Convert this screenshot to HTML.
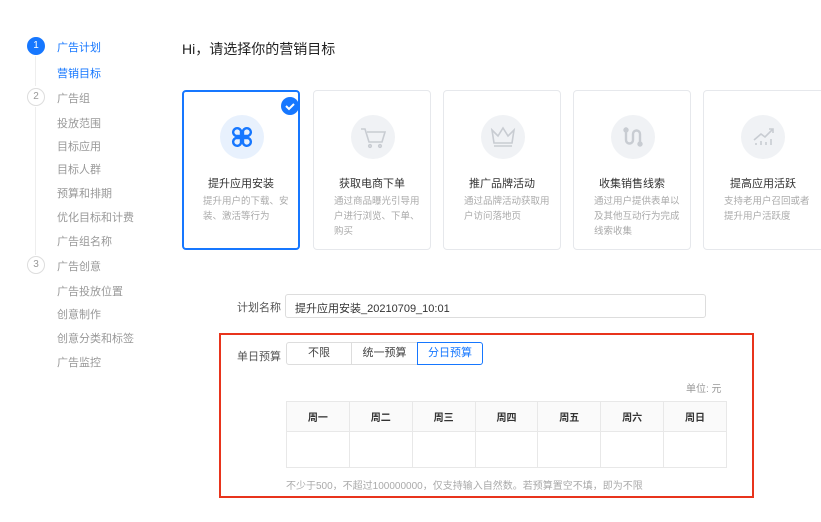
<!DOCTYPE html>
<html><head><meta charset="utf-8"><style>
*{margin:0;padding:0;box-sizing:border-box}
body{width:821px;height:522px;background:#fff;font-family:"Liberation Sans","Noto Sans CJK SC",sans-serif;position:relative;overflow:hidden;color:#333}
.a{position:absolute}
.nav{font-size:11px;color:#999;left:57px}
.circ{width:18px;height:18px;border-radius:50%;border:1px solid #ddd;color:#999;font-size:10px;text-align:center;line-height:16px;left:27px}
.vl{left:35px;width:1px;background:#eee}
.card{top:90px;width:118px;height:160px;border:1px solid #e6e8ec;border-radius:4px;text-align:center}
.ic{position:absolute;left:37px;top:24px;width:44px;height:44px;border-radius:50%;background:#f0f2f5}
.ct{position:absolute;top:84px;left:0;right:0;font-size:11px;color:#333}
.cd{position:absolute;top:103px;left:20px;width:88px;font-size:9.5px;color:#aaa;line-height:15px;text-align:left}
table{border-collapse:collapse}
td{border:1px solid #e8e8e8;width:63px;text-align:center;font-size:10px;color:#333;font-weight:bold}
</style></head><body>
<div class="a vl" style="top:56px;height:30px"></div>
<div class="a vl" style="top:107px;height:148px"></div>
<div class="a circ" style="top:37px;background:#1677ff;border-color:#1677ff;color:#fff">1</div>
<div class="a circ" style="top:88px">2</div>
<div class="a circ" style="top:256px">3</div>
<div class="a nav" style="top:39px;color:#1677ff">广告计划</div>
<div class="a nav" style="top:65px;color:#1677ff">营销目标</div>
<div class="a nav" style="top:90px">广告组</div>
<div class="a nav" style="top:115px">投放范围</div>
<div class="a nav" style="top:138px">目标应用</div>
<div class="a nav" style="top:161px">目标人群</div>
<div class="a nav" style="top:185px">预算和排期</div>
<div class="a nav" style="top:209px">优化目标和计费</div>
<div class="a nav" style="top:233px">广告组名称</div>
<div class="a nav" style="top:258px">广告创意</div>
<div class="a nav" style="top:283px">广告投放位置</div>
<div class="a nav" style="top:306px">创意制作</div>
<div class="a nav" style="top:330px">创意分类和标签</div>
<div class="a nav" style="top:354px">广告监控</div>

<div class="a" style="left:182px;top:39px;font-size:14px;color:#222">Hi，请选择你的营销目标</div>

<div class="a card" style="left:182px;border:2px solid #1677ff">
 <div class="ic" style="left:36px;top:23px;background:#e8f1fd"><svg width="44" height="44" viewBox="0 0 44 44" fill="none" stroke="#1677ff" stroke-width="2.4"><path d="M21 21h-5a4 4 0 1 1 5-5z M23 21h5a4 4 0 1 0-5-5z M21 23h-5a4 4 0 1 0 5 5z M23 23h5a4 4 0 1 1-5 5z"/></svg></div>
 <div class="ct" style="top:83px">提升应用安装</div>
 <div class="cd" style="top:102px;left:19px">提升用户的下载、安装、激活等行为</div>
 <div style="position:absolute;right:-1px;top:5px;width:18px;height:18px;border-radius:50%;background:#1677ff"><svg width="18" height="18"><path d="M5 9l3 3 5-5" stroke="#fff" stroke-width="2" fill="none"/></svg></div>
</div>
<div class="a card" style="left:313px"><div class="ic"><svg width="44" height="44" fill="none" stroke="#c8ccd2" stroke-width="1.6"><path d="M10 14h4l4 13h13l3-10H16"/><circle cx="19" cy="31" r="1.3"/><circle cx="29" cy="31" r="1.3"/></svg></div><div class="ct">获取电商下单</div><div class="cd">通过商品曝光引导用户进行浏览、下单、购买</div></div>
<div class="a card" style="left:443px"><div class="ic"><svg width="44" height="44" fill="none" stroke="#c8ccd2" stroke-width="1.6"><path d="M11 15l6 6 5-8 5 8 6-6-2 13H13z M13 31h18"/></svg></div><div class="ct">推广品牌活动</div><div class="cd">通过品牌活动获取用户访问落地页</div></div>
<div class="a card" style="left:573px"><div class="ic"><svg width="44" height="44" fill="none" stroke="#c8ccd2" stroke-width="2.4"><path d="M15 15v10a3.5 3.5 0 0 0 7 0v-6a3.5 3.5 0 0 1 7 0v10"/><circle cx="15" cy="15" r="1.5" fill="#c8ccd2"/><circle cx="29" cy="29" r="1.5" fill="#c8ccd2"/></svg></div><div class="ct">收集销售线索</div><div class="cd">通过用户提供表单以及其他互动行为完成线索收集</div></div>
<div class="a card" style="left:703px;width:130px"><div class="ic"><svg width="44" height="44" fill="none" stroke="#c8ccd2" stroke-width="1.6"><path d="M13 25l7-6 4 3 8-8 M28 14h4v4 M15 30v-2 M20 30v-4 M25 30v-3 M30 30v-6"/></svg></div><div class="ct" style="width:118px">提高应用活跃</div><div class="cd">支持老用户召回或者提升用户活跃度</div></div>

<div class="a" style="left:237px;top:299px;font-size:11px;color:#555">计划名称</div>
<div class="a" style="left:285px;top:294px;width:421px;height:24px;border:1px solid #ddd;border-radius:3px;font-size:11px;color:#333;padding:5px 9px">提升应用安装_20210709_10:01</div>

<div class="a" style="left:219px;top:333px;width:535px;height:165px;border:2px solid #e8341c"></div>
<div class="a" style="left:237px;top:348px;font-size:11px;color:#555">单日预算</div>
<div class="a" style="left:286px;top:342px;width:66px;height:23px;border:1px solid #ddd;border-radius:3px 0 0 3px;font-size:11px;text-align:center;line-height:21px;color:#444">不限</div>
<div class="a" style="left:351px;top:342px;width:67px;height:23px;border:1px solid #ddd;font-size:11px;text-align:center;line-height:21px;color:#444">统一预算</div>
<div class="a" style="left:417px;top:342px;width:66px;height:23px;border:1px solid #1677ff;border-radius:0 3px 3px 0;font-size:11px;text-align:center;line-height:21px;color:#1677ff">分日预算</div>
<div class="a" style="left:686px;top:380px;font-size:10px;color:#999">单位: 元</div>
<table class="a" style="left:286px;top:401px;width:441px">
<tr style="height:30px;background:#fafafa"><td>周一</td><td>周二</td><td>周三</td><td>周四</td><td>周五</td><td>周六</td><td>周日</td></tr>
<tr style="height:36px"><td></td><td></td><td></td><td></td><td></td><td></td><td></td></tr>
</table>
<div class="a" style="left:286px;top:477px;font-size:10px;color:#aaa">不少于500，不超过100000000，仅支持输入自然数。若预算置空不填，即为不限</div>
</body></html>
